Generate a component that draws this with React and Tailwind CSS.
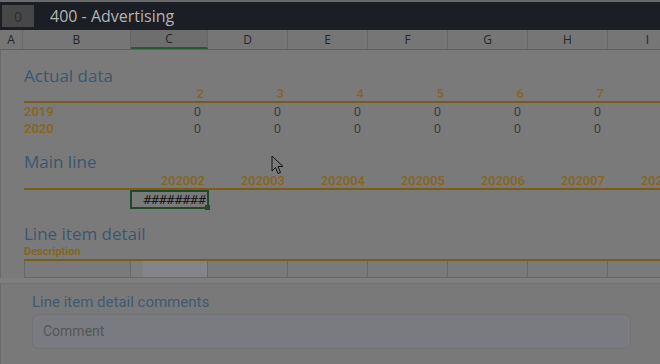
import React from 'react';

const cols = [
  { key: 'A', w: 'w-[23px]' },
  { key: 'B', w: 'w-[108px]' },
  { key: 'C', w: 'w-[77px]' },
  { key: 'D', w: 'w-[80px]' },
  { key: 'E', w: 'w-[80px]' },
  { key: 'F', w: 'w-[80px]' },
  { key: 'G', w: 'w-[80px]' },
  { key: 'H', w: 'w-[80px]' },
  { key: 'I', w: 'w-[80px]' },
];

// data columns start at C
const dataW = ['w-[77px]', 'w-[80px]', 'w-[80px]', 'w-[80px]', 'w-[80px]', 'w-[80px]', 'w-[80px]'];

function Cursor() {
  return (
    <svg className="absolute left-[271px] top-[155px]" width="14" height="21" viewBox="0 0 14 21">
      <path d="M1 1 L1 16 L4.5 12.5 L7 18.5 L9.5 17.5 L7 11.5 L12 11.5 Z" fill="#7b7b7b" stroke="#111" strokeWidth="1" strokeLinejoin="round" />
    </svg>
  );
}

export default function App() {
  const heads = ['2', '3', '4', '5', '6', '7'];
  const periods = ['202002', '202003', '202004', '202005', '202006', '202007', '202008'];

  return (
    <div className="relative w-[660px] h-[364px] overflow-hidden bg-[#7a7a7a] font-['Roboto',sans-serif]">
      {/* Title bar */}
      <div className="h-[2px] bg-[#6a6a6a]" />
      <div className="h-[28px] bg-[#1c1e26] flex items-center">
        <div className="ml-[2px] w-[32px] h-[22px] bg-[#474747] flex items-center justify-center text-[#2e2e2e] text-[14px] font-['Open_Sans',sans-serif]">0</div>
        <div className="ml-[16px] text-[#b4b4b4] text-[16px] font-['Open_Sans',sans-serif]">400 - Advertising</div>
      </div>

      {/* Column header */}
      <div className="flex h-[20px] bg-[#767676] border-b border-[#5f5f5f]">
        {cols.map((c) => (
          <div
            key={c.key}
            className={`${c.w} shrink-0 flex items-center justify-center text-[12px] text-[#262626] border-r border-[#666] font-['Open_Sans',sans-serif] ${c.key === 'C' ? 'bg-[#6e6e6e] border-b-2 border-b-[#255c35]' : ''}`}
          >
            {c.key}
          </div>
        ))}
      </div>

      {/* Sheet content */}
      <div className="pl-[23px] border-l border-[#6a6a6a] overflow-hidden">
        <div className="pt-[15px] h-[37px] text-[17px] leading-[22px] text-[#3b5670] font-['Open_Sans',sans-serif]">Actual data</div>

        <div className="flex h-[14px] items-end text-[13px] font-medium text-[#86661c] leading-[14px]">
          <div className="w-[107px] shrink-0" />
          {heads.map((h, i) => (
            <div key={h} className={`${dataW[i]} shrink-0 text-right pr-[4px]`}>{h}</div>
          ))}
        </div>
        <div className="h-[2px] bg-[#7a5c1a] w-[700px]" />
        {['2019', '2020'].map((y) => (
          <div key={y} className="flex h-[17px] items-center text-[13px]">
            <div className="w-[107px] shrink-0 font-semibold text-[#86661c]">{y}</div>
            {heads.map((h, i) => (
              <div key={h} className={`${dataW[i]} shrink-0 text-right pr-[7px] text-[#3e3e3e]`}>0</div>
            ))}
          </div>
        ))}

        <div className="mt-[14px] h-[22px] text-[17px] leading-[22px] text-[#3b5670] font-['Open_Sans',sans-serif]">Main line</div>
        <div className="flex h-[15px] items-end text-[13px] font-medium text-[#86661c] leading-[14px]">
          <div className="w-[107px] shrink-0" />
          {periods.map((p, i) => (
            <div key={p} className={`${dataW[i]} shrink-0 text-right pr-[3px] whitespace-nowrap`}>{p}</div>
          ))}
        </div>
        <div className="h-[2px] bg-[#7a5c1a] w-[700px]" />
        <div className="flex h-[19px]">
          <div className="w-[106px] shrink-0" />
          <div className="relative w-[79px] shrink-0 h-[19px] border-2 border-[#1f4a2a] flex items-center justify-end pr-[1px] text-[13px] text-[#1a1a1a] font-['DejaVu_Sans_Mono',monospace]">
            ########
            <div className="absolute -right-[3px] -bottom-[3px] w-[5px] h-[5px] bg-[#1f4a2a]" />
          </div>
        </div>

        <div className="mt-[14px] h-[22px] text-[17px] leading-[22px] text-[#3b5670] font-['Open_Sans',sans-serif]">Line item detail</div>
        <div className="h-[14px] text-[11px] leading-[14px] font-bold text-[#86661c]">Description</div>
        <div className="h-[2px] bg-[#7a5c1a] w-[700px]" />
        <div className="flex h-[17px] border-b border-[#686868] border-l w-[700px]">
          <div className="w-[106px] shrink-0 border-r border-[#686868]" />
          <div className="w-[77px] shrink-0 border-r border-[#686868] bg-[#7e7e7e] flex">
            <div className="w-[12px]" />
            <div className="flex-1 bg-[#84848a]" />
          </div>
          {[0, 1, 2, 3, 4, 5].map((i) => (
            <div key={i} className="w-[80px] shrink-0 border-r border-[#686868]" />
          ))}
        </div>
      </div>

      {/* Comments panel */}
      <div className="h-[6px] bg-[#7e7e7e] border-b border-[#707070]" />
      <div className="px-[31px] pt-[9px] bg-[#797979] border-l border-[#6a6a6a] h-full">
        <div className="text-[15px] leading-[18px] text-[#3f5a72] font-['Roboto',sans-serif]">Line item detail comments</div>
        <div className="mt-[3px] w-[599px] h-[35px] rounded-[6px] bg-[#7a7b80] border border-[#727272] flex items-center pl-[10px] text-[14px] text-[#555]">
          Comment
        </div>
      </div>

      <Cursor />
    </div>
  );
}
